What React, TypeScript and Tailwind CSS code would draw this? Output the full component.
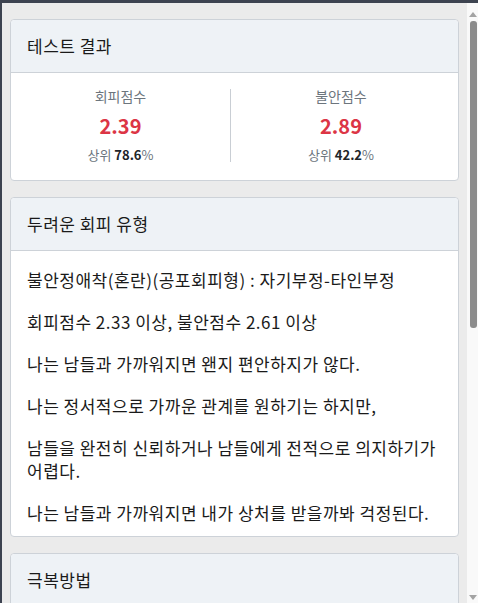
import React from "react";

const font = { fontFamily: '"Noto Sans CJK KR", "Noto Sans", sans-serif' };

function Score({ label, value, rank, border }: { label: string; value: string; rank: string; border?: boolean }) {
  return (
    <div className={"flex flex-col items-center h-[73px] " + (border ? "border-r border-[#c9ced4]" : "")}>
      <div className="text-[14px] leading-[14px] text-[#6c757d]">{label}</div>
      <div className="mt-[11px] text-[20px] leading-[24px] font-bold text-[#dc3545]">{value}</div>
      <div className="mt-[9px] text-[13px] leading-[16px] text-[#6c757d]">
        상위 <span className="font-bold text-[#212529]">{rank}</span>%
      </div>
    </div>
  );
}

function CardHeader({ title }: { title: string }) {
  return (
    <div className="h-[53px] flex items-center px-4 bg-[#eef2f6] border-b border-[#cdd2d8] rounded-t-[4px]">
      <span className="text-[17px] tracking-[0.5px] text-[#1a1a1a]">{title}</span>
    </div>
  );
}

export default function App() {
  const paras = [
    "불안정애착(혼란)(공포회피형) : 자기부정-타인부정",
    "회피점수 2.33 이상, 불안점수 2.61 이상",
    "나는 남들과 가까워지면 왠지 편안하지가 않다.",
    "나는 정서적으로 가까운 관계를 원하기는 하지만,",
    "남들을 완전히 신뢰하거나 남들에게 전적으로 의지하기가 어렵다.",
    "나는 남들과 가까워지면 내가 상처를 받을까봐 걱정된다.",
  ];
  return (
    <div style={font} className="w-[478px] h-[603px] flex flex-col overflow-hidden bg-[#ebebeb]">
      <div className="h-[3px] bg-[#3d4350] shrink-0" />
      <div className="flex flex-1 min-h-0">
        <div className="w-[2px] bg-[#3d4350] shrink-0" />
        <div className="flex-1 min-w-0 bg-[#ebebeb] px-2 pt-4 flex flex-col gap-4 overflow-hidden">
          <div className="bg-white border border-[#cdd2d8] rounded-[4px] shrink-0">
            <CardHeader title="테스트 결과" />
            <div className="pt-4 pb-[18px] grid grid-cols-[220px_220px]">
              <Score label="회피점수" value="2.39" rank="78.6" border />
              <Score label="불안점수" value="2.89" rank="42.2" />
            </div>
          </div>
          <div className="bg-white border border-[#cdd2d8] rounded-[4px] shrink-0">
            <CardHeader title="두려운 회피 유형" />
            <div className="px-4 pt-[18px] pb-3 text-[17px] tracking-[0.5px] leading-[22.5px] text-[#1a1a1a] flex flex-col gap-[19.5px]">
              {paras.map((p) => (
                <p key={p}>{p}</p>
              ))}
            </div>
          </div>
          <div className="bg-white border border-[#cdd2d8] rounded-[4px] shrink-0">
            <CardHeader title="극복방법" />
            <div className="h-[100px]" />
          </div>
        </div>
        <div className="w-[11px] shrink-0 bg-[#f9f9f9] flex flex-col items-center">
          <svg width="8" height="5" viewBox="0 0 8 5" className="mt-[9px] ml-[1px]">
            <polygon points="0,5 8,5 4,0" fill="#a3a3a3" />
          </svg>
          <div className="mt-[4px] ml-[1px] w-[7px] h-[307px] rounded-[3px] bg-[#8c8c8c]" />
          <div className="flex-1" />
          <svg width="8" height="5" viewBox="0 0 8 5" className="mb-[3px] ml-[1px]">
            <polygon points="0,0 8,0 4,5" fill="#a3a3a3" />
          </svg>
        </div>
      </div>
    </div>
  );
}
